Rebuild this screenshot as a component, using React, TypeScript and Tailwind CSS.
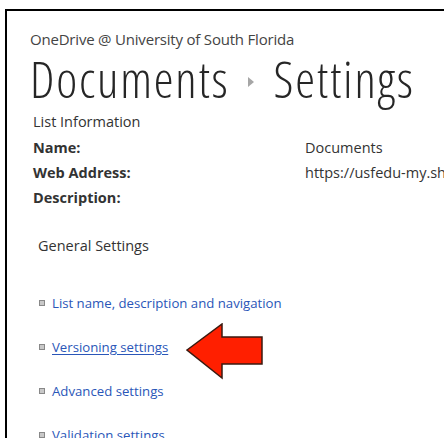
import React from 'react';

const links = [
  'List name, description and navigation',
  'Versioning settings',
  'Advanced settings',
  'Validation settings',
];

const Bullet = () => (
  <span className="mr-[7px] inline-block h-[6px] w-[6px] shrink-0 border border-[#888] bg-[#c8c8c8]" />
);

const RedArrow = () => (
  <svg width="78" height="57" viewBox="0 0 78 57" className="absolute left-[147px] top-[-14px]">
    <path
      d="M1 27 L36 1 L36 14 L76 14 L76 41 L36 41 L36 55 Z"
      fill="#ff1f00"
      stroke="#3a1a10"
      strokeWidth="1.5"
      strokeLinejoin="miter"
    />
  </svg>
);

export default function App() {
  return (
    <div className="h-[438px] w-[444px] overflow-hidden bg-white font-['Open_Sans',sans-serif] text-[#333]">
      <div className="ml-[5px] mt-[9px] h-[440px] border-l-2 border-t-2 border-black pl-[23px] pt-[18px]">
        <div className="text-[15px] leading-[20px] tracking-[-0.2px] text-[#444]">
          OneDrive @ University of South Florida
        </div>

        <h1 className="mt-[5px] flex items-center whitespace-nowrap text-[50px] font-light leading-[50px] tracking-[1.8px] text-[#262626] font-stretch-semi-condensed">
          <span>Documents</span>
          <svg width="8" height="10" viewBox="0 0 8 10" className="ml-[17px] mr-[19px] mt-[6px] shrink-0">
            <path d="M1 0 L7 5 L1 10 Z" fill="#a6a6a6" />
          </svg>
          <span>Settings</span>
        </h1>

        <div className="mt-[8px] pl-[3px] text-[14.5px] leading-[20px]">List Information</div>

        <div className="mt-[6px] grid grid-cols-[272px_1fr] gap-y-[5px] whitespace-nowrap pl-[3px] text-[14.5px] leading-[20px]">
          <div className="font-bold">Name:</div>
          <div>Documents</div>
          <div className="font-bold">Web Address:</div>
          <div>https://usfedu-my.sharepoint.com/personal/Documents</div>
          <div className="font-bold">Description:</div>
          <div />
        </div>

        <div className="mt-[28px] pl-[8px] text-[14.5px] leading-[20px]">General Settings</div>

        <ul className="mt-[37px] flex flex-col gap-[24px] pl-[9px] text-[13.2px] leading-[20px] text-[#2a56b8]">
          {links.map((label, i) => (
            <li key={label} className="relative flex items-center whitespace-nowrap">
              <Bullet />
              <a href="#" className={i === 1 ? 'underline underline-offset-2' : ''}>
                {label}
              </a>
              {i === 1 && <RedArrow />}
            </li>
          ))}
        </ul>
      </div>
    </div>
  );
}
